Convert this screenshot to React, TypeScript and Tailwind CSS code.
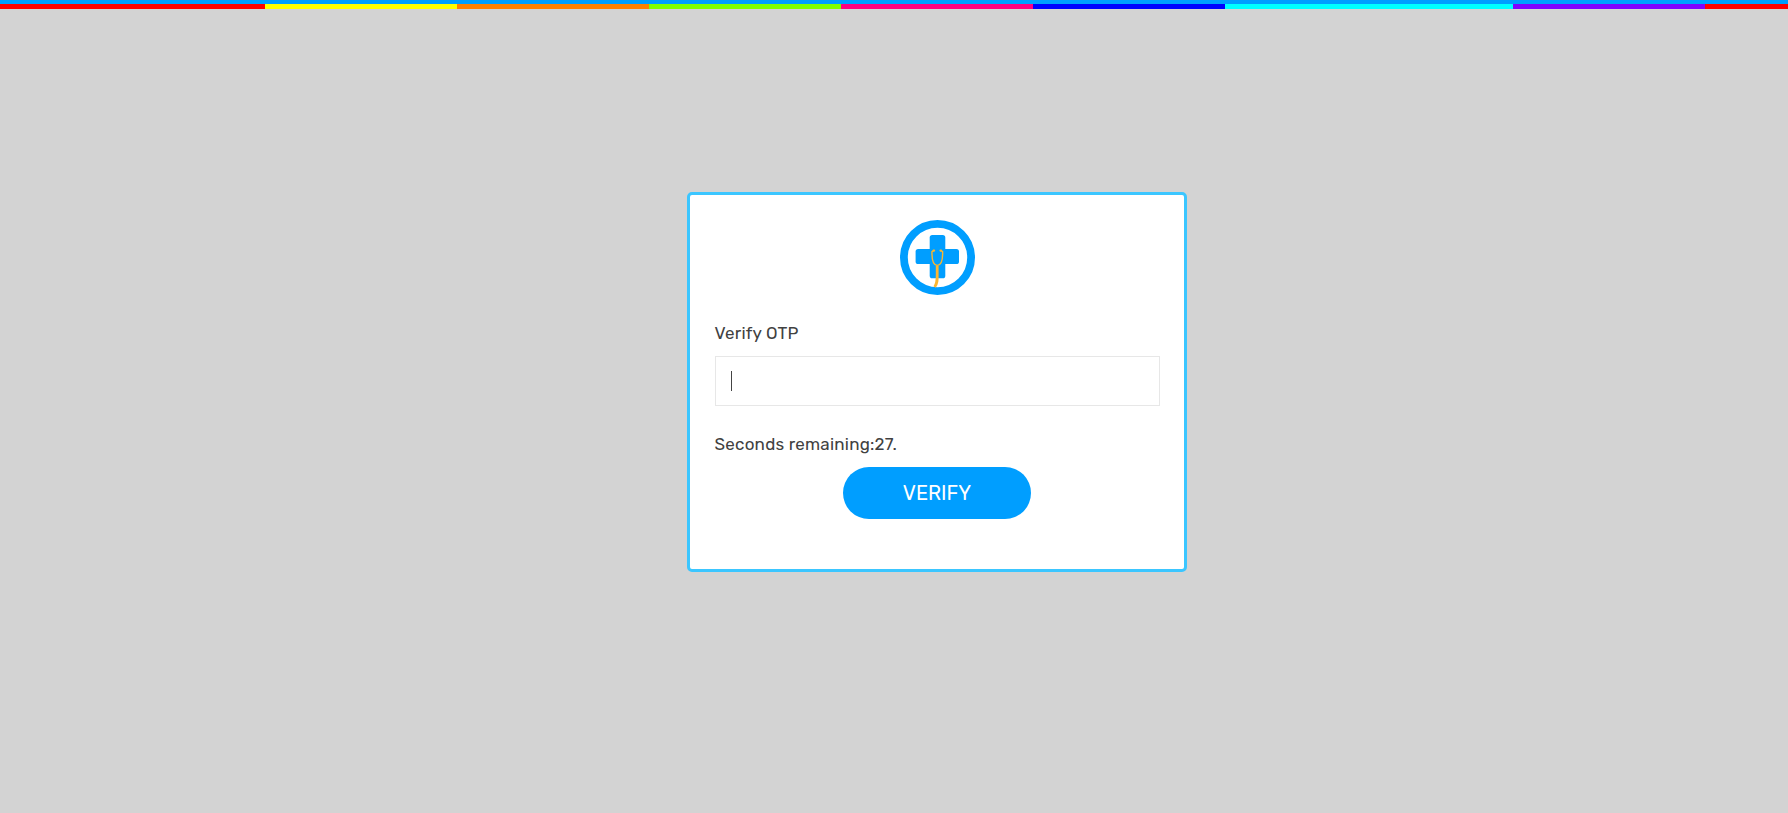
const stripes = [
  'w-[265px] bg-[#ff0000]',
  'w-[192px] bg-[#ffff00]',
  'w-[192px] bg-[#ff8000]',
  'w-[192px] bg-[#80ff00]',
  'w-[192px] bg-[#ff0080]',
  'w-[192px] bg-[#0000ff]',
  'w-[288px] bg-[#00ffff]',
  'w-[192px] bg-[#8000ff]',
  'flex-1 bg-[#ff0000]',
];

function Logo() {
  return (
    <svg className="size-[75px]" viewBox="0 0 75 75" fill="none">
      <circle cx="37.5" cy="37.5" r="33.6" stroke="#009eff" strokeWidth="7.8" />
      <rect x="29.7" y="15" width="15.6" height="43.3" rx="2.6" fill="#009eff" />
      <rect x="15.6" y="29" width="43.4" height="15" rx="2.6" fill="#009eff" />
      <g stroke="#fbb62f" strokeLinecap="round">
        <path d="M33.5 30.6 32 31.6C31.8 38 32.6 45.2 37.3 45.4C42 45.2 42.8 38 42.6 31.6L41.1 30.6" strokeWidth="1.4" />
        <path d="M33.6 30.6h.5M40.5 30.6h.5" strokeWidth="2.2" />
        <path d="M37.2 45.5V54C37.3 60 37.3 63.5 34.6 67" strokeWidth="2.8" strokeLinecap="butt" />
      </g>
    </svg>
  );
}

export default function App() {
  return (
    <div className="flex h-screen flex-col overflow-hidden bg-[#d3d3d3] font-[Rubik,Roboto,sans-serif] text-[#414141]">
      <div className="h-1 shrink-0 bg-[#009eff]" />
      <div className="flex h-[5px] shrink-0">
        {stripes.map((stripe, i) => (
          <div key={i} className={stripe} />
        ))}
      </div>
      <main className="mt-[183px] ml-[687px] flex h-[380px] w-[500px] flex-col rounded-[5px] border-3 border-[#3bc6ff] bg-white px-[25px] pt-[25px]">
        <div className="flex justify-center">
          <Logo />
        </div>
        <label className="mt-[26px] -ml-[0.4px] flex h-6 items-center text-[17px] leading-6 tracking-[0.2px]">Verify OTP</label>
        <div className="mt-[11px] flex h-[50px] w-[445px] items-center border border-[#e7e7e7] bg-white pl-[15px]">
          <span className="h-5 w-px bg-[#444]" />
        </div>
        <p className="mt-[26px] -ml-[0.5px] h-6 text-[17px] leading-6 tracking-[0.22px]">Seconds remaining:27.</p>
        <button className="mt-[11px] h-[52px] w-[188px] self-center rounded-full bg-[#009eff] text-[20px] leading-6 text-white">
          VERIFY
        </button>
      </main>
    </div>
  );
}
